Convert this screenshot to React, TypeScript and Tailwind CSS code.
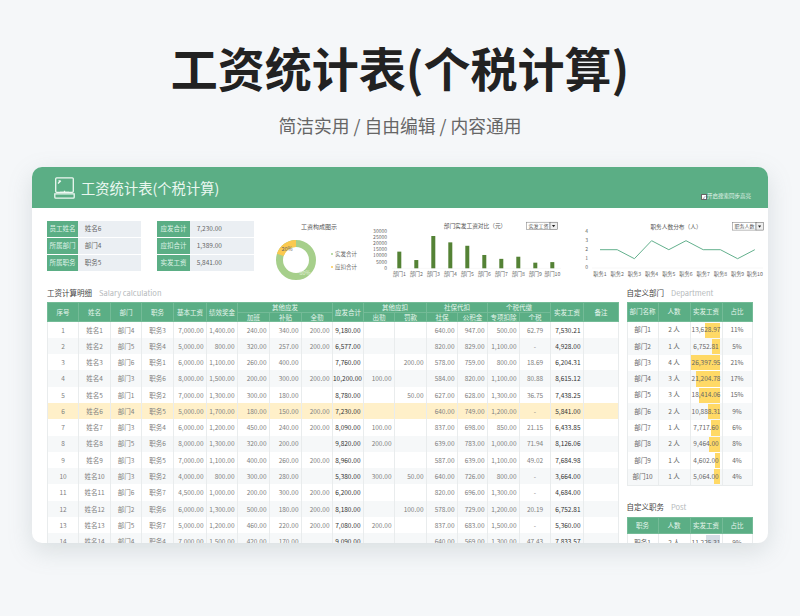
import React from "react";

const FONT = '"Noto Sans CJK SC", "Noto Sans", sans-serif';

type Row = (string | number)[];
const rows: Row[] = [
  [1, "姓名1", "部门4", "职务3", "7,000.00", "1,400.00", "240.00", "340.00", "200.00", "9,180.00", "", "", "640.00", "947.00", "500.00", "62.79", "7,530.21"],
  [2, "姓名2", "部门5", "职务4", "5,000.00", "800.00", "320.00", "257.00", "200.00", "6,577.00", "", "", "820.00", "829.00", "1,100.00", "-", "4,928.00"],
  [3, "姓名3", "部门6", "职务1", "6,000.00", "1,100.00", "260.00", "400.00", "", "7,760.00", "", "200.00", "578.00", "759.00", "800.00", "18.69", "6,204.31"],
  [4, "姓名4", "部门3", "职务6", "8,000.00", "1,500.00", "200.00", "300.00", "200.00", "10,200.00", "100.00", "", "584.00", "820.00", "1,100.00", "80.88", "8,615.12"],
  [5, "姓名5", "部门1", "职务2", "7,000.00", "1,300.00", "300.00", "180.00", "", "8,780.00", "", "50.00", "627.00", "628.00", "1,300.00", "36.75", "7,438.25"],
  [6, "姓名6", "部门4", "职务5", "5,000.00", "1,700.00", "180.00", "150.00", "200.00", "7,230.00", "", "", "640.00", "749.00", "1,200.00", "-", "5,841.00"],
  [7, "姓名7", "部门3", "职务4", "6,000.00", "1,200.00", "450.00", "240.00", "200.00", "8,090.00", "100.00", "", "837.00", "698.00", "850.00", "21.15", "6,433.85"],
  [8, "姓名8", "部门5", "职务6", "8,000.00", "1,300.00", "320.00", "200.00", "", "9,820.00", "200.00", "", "639.00", "783.00", "1,000.00", "71.94", "8,126.06"],
  [9, "姓名9", "部门3", "职务5", "7,000.00", "1,100.00", "400.00", "260.00", "200.00", "8,960.00", "", "", "587.00", "639.00", "1,100.00", "49.02", "7,684.98"],
  [10, "姓名10", "部门3", "职务2", "4,000.00", "800.00", "300.00", "280.00", "", "5,380.00", "300.00", "50.00", "640.00", "726.00", "800.00", "-", "3,664.00"],
  [11, "姓名11", "部门6", "职务7", "4,500.00", "1,000.00", "200.00", "300.00", "200.00", "6,200.00", "", "", "820.00", "696.00", "1,300.00", "-", "4,684.00"],
  [12, "姓名12", "部门2", "职务6", "6,000.00", "1,300.00", "500.00", "180.00", "200.00", "8,180.00", "", "100.00", "578.00", "729.00", "1,200.00", "20.19", "6,752.81"],
  [13, "姓名13", "部门5", "职务7", "5,000.00", "1,200.00", "460.00", "220.00", "200.00", "7,080.00", "200.00", "", "837.00", "683.00", "1,500.00", "-", "5,360.00"],
  [14, "姓名14", "部门4", "职务4", "7,000.00", "1,500.00", "420.00", "170.00", "", "9,090.00", "", "", "640.00", "569.00", "1,300.00", "47.43", "7,833.57"],
];

const colW = [31, 32, 31, 32, 33, 31, 32, 32, 31, 31, 31, 32, 31, 30, 32, 31, 33, 35];

const depts: [string, string, string, number, string][] = [
  ["部门1", "2 人", "13,628.97", 13629, "11%"],
  ["部门2", "1 人", "6,752.81", 6753, "5%"],
  ["部门3", "4 人", "26,397.95", 26398, "21%"],
  ["部门4", "3 人", "21,204.78", 21205, "17%"],
  ["部门5", "3 人", "18,414.06", 18414, "15%"],
  ["部门6", "2 人", "10,888.31", 10888, "9%"],
  ["部门7", "1 人", "7,717.60", 7718, "6%"],
  ["部门8", "2 人", "9,464.00", 9464, "8%"],
  ["部门9", "1 人", "4,602.00", 4602, "4%"],
  ["部门10", "1 人", "5,064.00", 5064, "4%"],
];

const Th = ({ children, rs, cs }: { children: React.ReactNode; rs?: number; cs?: number }) => (
  <th
    rowSpan={rs}
    colSpan={cs}
    className="font-normal text-center text-[#e6f5ec] text-[6.5px] leading-none p-0 h-[9.5px] border border-[#74bb97]"
  >
    {children}
  </th>
);

function MainTable() {
  return (
    <table className="table-fixed border-collapse w-[571px]">
      <colgroup>
        {colW.map((w, i) => (
          <col key={i} style={{ width: w }} />
        ))}
      </colgroup>
      <thead className="bg-[#5bae85]">
        <tr>
          <Th rs={2}>序号</Th>
          <Th rs={2}>姓名</Th>
          <Th rs={2}>部门</Th>
          <Th rs={2}>职务</Th>
          <Th rs={2}>基本工资</Th>
          <Th rs={2}>绩效奖金</Th>
          <Th cs={3}>其他应发</Th>
          <Th rs={2}>应发合计</Th>
          <Th cs={2}>其他应扣</Th>
          <Th cs={2}>社保代扣</Th>
          <Th cs={2}>个税代缴</Th>
          <Th rs={2}>实发工资</Th>
          <Th rs={2}>备注</Th>
        </tr>
        <tr>
          {["加班", "补贴", "全勤", "出勤", "罚款", "社保", "公积金", "专项扣除", "个税"].map((t) => (
            <Th key={t}>{t}</Th>
          ))}
        </tr>
      </thead>
      <tbody>
        {rows.map((r, i) => {
          const bg = i === 5 ? "bg-[#fff0c9]" : i % 2 === 1 ? "bg-[#f6f8f9]" : "bg-white";
          return (
            <tr key={i} className={`${bg} h-[16.3px]`}>
              {r.map((c, j) => {
                const center = j < 4 || j === 15;
                const strong = j === 9 || j === 16;
                return (
                  <td
                    key={j}
                    className={`p-0 text-[6.5px] leading-none border-x border-[#e9eced] ${
                      center ? "text-center" : "text-right pr-[2.5px]"
                    } ${strong ? "text-[#333]" : "text-[#808080]"}`}
                  >
                    {c}
                  </td>
                );
              })}
              <td className="p-0 border-x border-[#e9eced]" />
            </tr>
          );
        })}
      </tbody>
    </table>
  );
}

const deptCols = [31, 32, 32, 30];

function SideCols() {
  return (
    <colgroup>
      {deptCols.map((w, i) => (
        <col key={i} style={{ width: w }} />
      ))}
    </colgroup>
  );
}

function SideHead({ a, h }: { a: string; h: string }) {
  return (
    <thead className="bg-[#5bae85]">
      <tr className={h}>
        {[a, "人数", "实发工资", "占比"].map((t) => (
          <th key={t} className="p-0 font-normal text-center text-[#e6f5ec] text-[6.5px] border border-[#74bb97]">
            {t}
          </th>
        ))}
      </tr>
    </thead>
  );
}

function DeptTable() {
  return (
    <table className="table-fixed border-collapse w-[125px] border-b border-[#e9eced]">
      <SideCols />
      <SideHead a="部门名称" h="h-[19px]" />
      <tbody>
        {depts.map((d, i) => (
          <tr key={d[0]} className={`h-[16.3px] ${i % 2 ? "bg-[#f6f8f9]" : "bg-white"}`}>
            <td className="p-0 text-center text-[6.5px] text-[#666] border-x border-[#e9eced]">{d[0]}</td>
            <td className="p-0 text-center text-[6.5px] text-[#666] border-x border-[#e9eced]">{d[1]}</td>
            <td className="p-0 border-x border-[#e9eced]">
              <div className="relative h-[16.3px] flex items-center justify-center text-[6.5px] text-[#666]">
                <div
                  className="absolute right-[1.5px] top-[0.5px] bottom-[0.5px] bg-[#ffd966]"
                  style={{ width: (d[3] / 26398) * 29.5 }}
                />
                <span className="relative">{d[2]}</span>
              </div>
            </td>
            <td className="p-0 text-center text-[6.5px] text-[#666] border-x border-[#e9eced]">{d[4]}</td>
          </tr>
        ))}
      </tbody>
    </table>
  );
}

function PostTable() {
  return (
    <table className="table-fixed border-collapse w-[125px]">
      <SideCols />
      <SideHead a="职务" h="h-[16.5px]" />
      <tbody>
        <tr className="h-[16.3px] bg-white">
          <td className="p-0 text-center text-[6.5px] text-[#666] border-x border-[#e9eced]">职务1</td>
          <td className="p-0 text-center text-[6.5px] text-[#666] border-x border-[#e9eced]">2 人</td>
          <td className="p-0 border-x border-[#e9eced]">
            <div className="relative h-[16.3px] flex items-center justify-center text-[6.5px] text-[#666]">
              <div className="absolute right-[1.5px] top-[0.5px] bottom-[0.5px] w-[14px] bg-[#d5dde6]" />
              <span className="relative">11,225.31</span>
            </div>
          </td>
          <td className="p-0 text-center text-[6.5px] text-[#666] border-x border-[#e9eced]">9%</td>
        </tr>
      </tbody>
    </table>
  );
}

function InfoBox({ items, lw, w }: { items: [string, string][]; lw: string; w: string }) {
  return (
    <div className={`flex flex-col gap-px shrink-0 ${w}`}>
      {items.map(([a, b]) => (
        <div key={a} className="flex h-[16.3px] bg-[#ebeff3]">
          <div className={`${lw} bg-[#5bae85] text-[#dff2e7] text-[6.5px] flex items-center justify-center`}>{a}</div>
          <div className="pl-[6.5px] text-[#666] text-[6.5px] flex items-center">{b}</div>
        </div>
      ))}
    </div>
  );
}

function Donut() {
  return (
    <svg width="100" height="66" viewBox="0 0 100 66" className="block shrink-0">
      <text x="53" y="7.5" textAnchor="middle" fontSize="6" fill="#555">工资构成图示</text>
      <circle cx="30" cy="39" r="16.5" fill="none" stroke="#a6cf8b" strokeWidth="7" />
      <path d="M30 22.5 A16.5 16.5 0 0 0 14.3 33.9" fill="none" stroke="#fbc94f" strokeWidth="7" />
      <text x="21" y="29.5" textAnchor="middle" fontSize="5.5" fill="#666">20%</text>
      <text x="39" y="54" textAnchor="middle" fontSize="5.5" fill="#e7f3df">80%</text>
      <circle cx="66" cy="33" r="1" fill="#a6cf8b" />
      <text x="69" y="35" fontSize="5.5" fill="#666">实发合计</text>
      <circle cx="66" cy="46" r="1" fill="#fbc94f" />
      <text x="69" y="48" fontSize="5.5" fill="#666">应扣合计</text>
    </svg>
  );
}

const barVals = [13629, 6753, 26398, 21205, 18414, 10888, 7718, 9464, 4602, 5064];

function BarChart() {
  const base = 47.3;
  return (
    <svg width="195" height="66" viewBox="0 0 195 66" className="block shrink-0">
      <text x="104" y="6.5" textAnchor="middle" fontSize="5.7" fill="#555">部门实发工资对比（元）</text>
      <rect x="155.7" y="1.2" width="23.3" height="7.2" fill="#fff" stroke="#777" strokeWidth="0.5" />
      <text x="157.5" y="6.8" fontSize="5" fill="#555">实发工资</text>
      <rect x="179" y="1.2" width="7.3" height="7.2" fill="#eee" stroke="#555" strokeWidth="0.5" />
      <path d="M181 4l3.2 0-1.6 2.2z" fill="#222" />
      {[30000, 25000, 20000, 15000, 10000, 5000, 0].map((v, i) => (
        <text key={v} x="16" y={12 + i * 6.1} textAnchor="end" fontSize="5" fill="#666">{v}</text>
      ))}
      <line x1="21" x2="190" y1={base} y2={base} stroke="#eee" strokeWidth="0.5" />
      {barVals.map((v, i) => {
        const h = (v / 30000) * 36.7;
        const x = 28.3 + i * 17;
        return <rect key={i} x={x - 2} y={base - h} width="4" height={h} fill="#548235" />;
      })}
      {barVals.map((_, i) => (
        <text key={i} x={28.3 + i * 17} y="55" textAnchor="middle" fontSize="5.2" fill="#666">{`部门${i + 1}`}</text>
      ))}
    </svg>
  );
}

const lineVals = [2, 2, 1, 3, 2, 3, 2, 2, 1, 2];

function LineChart() {
  const xs = lineVals.map((_, i) => 25 + i * 17.2);
  const pts = lineVals.map((v, i) => `${xs[i]},${46.7 - v * 9}`).join(" ");
  return (
    <svg width="192" height="66" viewBox="0 0 192 66" className="block shrink-0">
      <text x="101" y="7.5" textAnchor="middle" fontSize="5.7" fill="#555">职务人数分布（人）</text>
      <rect x="157.7" y="1.7" width="23.3" height="7.4" fill="#fff" stroke="#777" strokeWidth="0.5" />
      <text x="159.5" y="7.3" fontSize="5" fill="#555">职务人数</text>
      <rect x="181" y="1.7" width="7.3" height="7.4" fill="#eee" stroke="#555" strokeWidth="0.5" />
      <path d="M183 4.6l3.2 0-1.6 2.2z" fill="#222" />
      {[4, 3, 2, 1, 0].map((v, i) => (
        <text key={v} x="13" y={12.4 + i * 9} textAnchor="end" fontSize="5" fill="#666">{v}</text>
      ))}
      <line x1="17" x2="188" y1="47" y2="47" stroke="#eee" strokeWidth="0.5" />
      <polyline points={pts} fill="none" stroke="#63b08d" strokeWidth="1" />
      {xs.map((x, i) => (
        <text key={i} x={x} y="55" textAnchor="middle" fontSize="5.2" fill="#666">{`职务${i + 1}`}</text>
      ))}
    </svg>
  );
}

function SectionTitle({ a, b, cls }: { a: string; b: string; cls: string }) {
  return (
    <div className={`flex items-center gap-[7px] text-[7.5px] leading-none ${cls}`}>
      <span className="text-[#444]">{a}</span>
      <span className="text-[#b5b9bb]">{b}</span>
    </div>
  );
}

export default function App() {
  return (
    <div className="w-[800px] h-[616px] overflow-hidden bg-[#f5f7f9] flex flex-col items-center" style={{ fontFamily: FONT }}>
      <h1 className="mt-[29px] h-[75px] text-[47px] leading-[75px] font-bold text-[#222] whitespace-nowrap">
        工资统计表(个税计算)
      </h1>
      <p className="mt-[9px] h-[24px] text-[17.8px] leading-[24px] text-[#666] whitespace-nowrap">
        简洁实用 / 自由编辑 / 内容通用
      </p>

      <div className="mt-[30px] w-[736px] h-[376px] shrink-0 rounded-[10px] bg-white overflow-hidden shadow-[0_8px_24px_rgba(120,135,140,0.22)]">
        <div className="h-[41px] bg-[#5bae85] flex items-center pl-[22px] pr-[17px]">
          <svg width="21" height="22" viewBox="0 0 21 22" fill="none" stroke="#eef8f2" strokeWidth="1.3" className="shrink-0 mt-px">
            <rect x="1.7" y="0.8" width="17.6" height="14.5" rx="1" />
            <path d="M0.8 16.8h19.4v3.4a1 1 0 0 1-1 1H1.8a1 1 0 0 1-1-1z" />
            <path d="M4 6.5l2.8-2.8M4.5 3.8h2" />
            <path d="M6 15.3h9M10.5 13.8v1.5" />
          </svg>
          <span className="ml-[6px] text-[14.3px] text-[#eaf7f0] whitespace-nowrap">工资统计表(个税计算)</span>
          <div className="ml-auto mt-[19px] flex items-center text-[5.5px] leading-none text-[#e6f5ec] whitespace-nowrap">
            <span className="w-[5.5px] h-[5.5px] bg-white border-[0.5px] border-[#666] flex items-center justify-center text-[#445] text-[4px]">✓</span>
            <span>开启搜索同步高亮</span>
          </div>
        </div>

        <div className="flex h-[66px] pl-[14.7px] pt-[12.5px]">
          <InfoBox
            w="w-[94px]"
            lw="w-[31.5px]"
            items={[["员工姓名", "姓名6"], ["所属部门", "部门4"], ["所属职务", "职务5"]]}
          />
          <div className="w-[16px] shrink-0" />
          <InfoBox
            w="w-[97px]"
            lw="w-[33.5px]"
            items={[["应发合计", "7,230.00"], ["应扣合计", "1,389.00"], ["实发工资", "5,841.00"]]}
          />
          <div className="ml-[12.3px] flex shrink-0">
            <Donut />
            <div className="w-[5px] shrink-0" />
            <BarChart />
            <div className="w-[9px] shrink-0" />
            <LineChart />
          </div>
        </div>

        <div className="flex pl-[15px] mt-[15px]">
          <div className="w-[580px] shrink-0">
            <SectionTitle a="工资计算明细" b="Salary calculation" cls="h-[8px]" />
            <div className="mt-[5px]">
              <MainTable />
            </div>
          </div>
          <div className="w-[125px] ml-[-0.5px]">
            <SectionTitle a="自定义部门" b="Department" cls="h-[8px]" />
            <div className="mt-[5px]">
              <DeptTable />
            </div>
            <SectionTitle a="自定义职务" b="Post" cls="h-[8px] mt-[17px]" />
            <div className="mt-[6px]">
              <PostTable />
            </div>
          </div>
        </div>
      </div>
    </div>
  );
}
